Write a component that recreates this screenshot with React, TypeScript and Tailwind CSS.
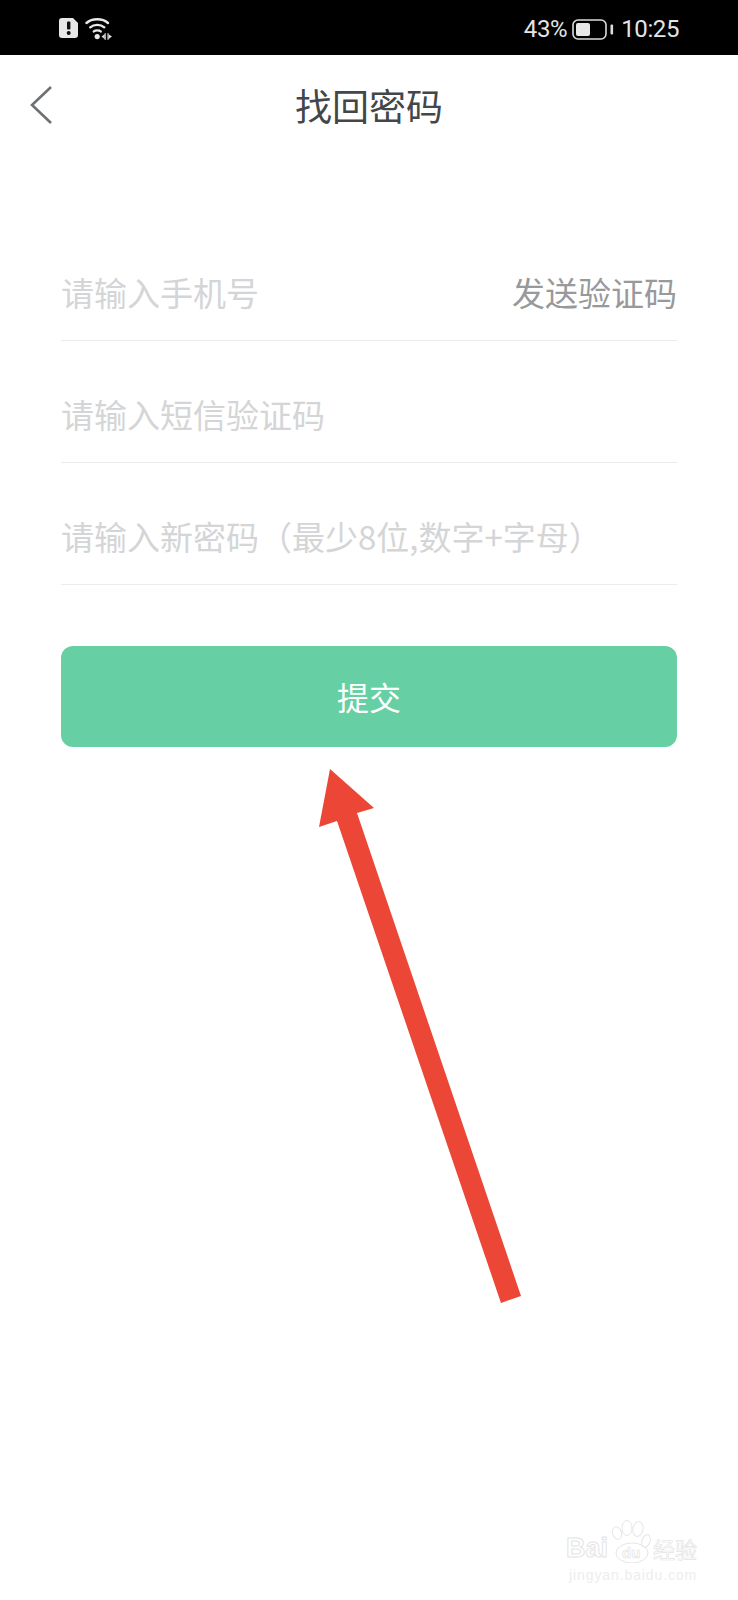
const CJK = "font-['Noto_Sans_CJK_SC','Noto_Sans',sans-serif]";

function WarnIcon() {
  return (
    <svg width="19" height="20" viewBox="0 0 19 20">
      <path d="M3 0H14L19 5V17a3 3 0 0 1-3 3H3a3 3 0 0 1-3-3V3a3 3 0 0 1 3-3Z" fill="#e8e8e8" />
      <rect x="8" y="3.5" width="3.4" height="8" rx="1" fill="#111" />
      <circle cx="9.7" cy="15" r="2" fill="#111" />
    </svg>
  );
}

function WifiIcon() {
  return (
    <svg width="27" height="23" viewBox="0 0 27 23" fill="none" stroke="#e8e8e8" strokeWidth="2.4" strokeLinecap="round">
      <path d="M1.5 6C7 1 17.5 1 23 6" />
      <path d="M5.2 10.3C9 7 15.5 7 19.3 10.3" />
      <path d="M8.8 14.4C10.6 13 13.9 13 15.7 14.4" />
      <circle cx="12.2" cy="19.6" r="2.6" fill="#e8e8e8" stroke="none" />
      <path d="M20.2 16.5V22.5" strokeWidth="1" />
      <path d="M23 16.5V22.5" strokeWidth="1" />
      <path d="M19.6 17.5L16.8 19.6L19.6 21.7Z" fill="#e8e8e8" strokeWidth="0.4" />
      <path d="M23.6 17.5L26.6 19.6L23.6 21.7Z" fill="#e8e8e8" strokeWidth="0.4" />
    </svg>
  );
}

function BatteryIcon() {
  return (
    <svg width="42" height="21" viewBox="0 0 42 21" fill="none">
      <rect x="1" y="1" width="33" height="19" rx="5" stroke="#dcdcdc" strokeWidth="1.6" />
      <rect x="4" y="4" width="14" height="13" rx="2" fill="#e8e8e8" />
      <rect x="38.5" y="5.5" width="2.6" height="10" rx="1" fill="#dcdcdc" />
    </svg>
  );
}

function Paw() {
  return (
    <svg width="40" height="43" viewBox="0 0 40 43" fill="none" stroke="#e6e6e6" strokeWidth="1">
      <ellipse cx="6" cy="13" rx="4.5" ry="6.5" transform="rotate(-20 6 13)" />
      <ellipse cx="16" cy="8" rx="5" ry="7.5" />
      <ellipse cx="27" cy="9" rx="5" ry="7.5" transform="rotate(12 27 9)" />
      <ellipse cx="35" cy="21" rx="4" ry="6.5" transform="rotate(18 35 21)" />
      <ellipse cx="21" cy="33" rx="16" ry="10" />
    </svg>
  );
}

function Field({ text, action }: { text: string; action?: string }) {
  return (
    <div className="h-[122px] flex items-end justify-between border-b border-[#ececec] pb-[25px]">
      <span className="text-[33px] leading-[46px] text-[#d4d5d6]">{text}</span>
      {action && <span className="text-[33px] leading-[46px] text-[#97999b]">{action}</span>}
    </div>
  );
}

export default function App() {
  return (
    <div className={`relative w-[738px] h-[1600px] bg-white overflow-hidden ${CJK}`}>
      <div className="h-[55px] bg-black flex items-center justify-between pl-[59px] pr-[59px] pt-[1px] text-[#e4e4e4] font-['Roboto',sans-serif]">
        <div className="flex items-center gap-[7px]">
          <WarnIcon />
          <WifiIcon />
        </div>
        <div className="flex items-center text-[24px] tracking-[-0.4px] pt-[2px]">
          <span>43%</span>
          <span className="ml-[5px] mr-[7px] flex"><BatteryIcon /></span>
          <span>10:25</span>
        </div>
      </div>

      <div className="relative h-[105px] flex items-center justify-center pb-[4px]">
        <svg className="absolute left-[29px] top-[30px]" width="24" height="40" viewBox="0 0 24 40" fill="none" stroke="#6d7173" strokeWidth="2.6">
          <path d="M22 2L3 20L22 38" />
        </svg>
        <h1 className="text-[37px] font-normal text-[#43474a]">找回密码</h1>
      </div>

      <div className="mx-[61px] mt-[59px] flex flex-col">
        <Field text="请输入手机号" action="发送验证码" />
        <Field text="请输入短信验证码" />
        <Field text="请输入新密码（最少8位,数字+字母）" />
        <button className="mt-[61px] h-[101px] rounded-[12px] bg-[#66cfa3] text-white text-[32px] pb-[2px]">提交</button>
      </div>

      {/* annotation arrow */}
      <svg className="absolute left-0 top-0" width="738" height="1600" viewBox="0 0 738 1600">
        <path d="M330 769L374 808L357 813L521 1296L501 1303L337 821L319 827Z" fill="#ec4736" />
      </svg>

      {/* watermark */}
      <div className="absolute left-[566px] top-[1520px] w-[140px]">
        <div className="flex items-end h-[43px]">
          <span className="w-[45px] font-['Liberation_Sans',sans-serif] font-bold text-[27px] leading-[30px] text-white [-webkit-text-stroke:1px_#e4e4e4]">Bai</span>
          <div className="relative flex">
            <Paw />
            <span className="absolute left-[11px] top-[24px] font-['Liberation_Sans',sans-serif] font-bold text-[15px] leading-[18px] text-white [-webkit-text-stroke:0.7px_#e4e4e4]">du</span>
          </div>
          <span className={`ml-[2px] text-[22px] leading-[30px] text-white [-webkit-text-stroke:0.7px_#e4e4e4] ${CJK}`}>经验</span>
        </div>
        <div className="mt-[5px] font-['Liberation_Sans',sans-serif] text-[14px] leading-[14px] tracking-[0.9px] pl-[3px] whitespace-nowrap text-[#ededed]">jingyan.baidu.com</div>
      </div>
    </div>
  );
}
